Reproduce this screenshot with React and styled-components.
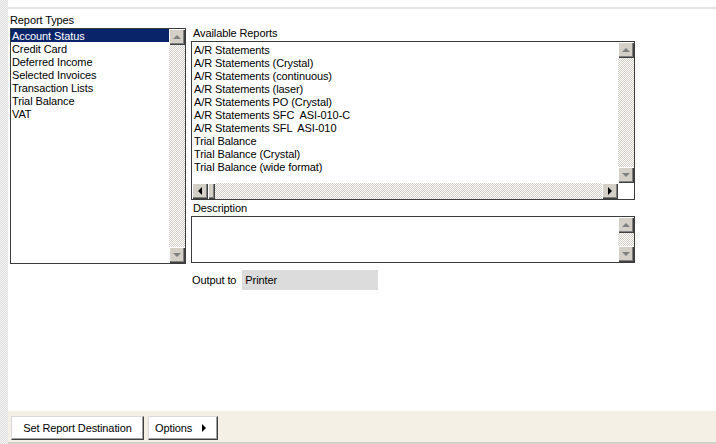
import React from 'react';
import styled, { createGlobalStyle } from 'styled-components';

const GlobalStyle = createGlobalStyle`
  html, body {
    margin: 0;
    padding: 0;
    height: 100%;
    background: #fff;
  }
  #root {
    height: 100%;
  }
  * {
    box-sizing: border-box;
  }
`;

const checker = (a, b) =>
  `repeating-conic-gradient(${a} 0 25%, ${b} 0 50%) 0 0 / 2px 2px`;

const Page = styled.div`
  display: flex;
  height: 100vh;
  font-family: "Liberation Sans", Arial, sans-serif;
  font-size: 11px;
  letter-spacing: -0.1px;
  color: #000;
`;

const SideStrip = styled.div`
  width: 8px;
  flex-shrink: 0;
  background: ${checker('#e0e0e0', '#f2f2f2')};
`;

const Main = styled.div`
  flex: 1;
  display: flex;
  flex-direction: column;
  min-width: 0;
`;

const TopBand = styled.div`
  height: 9px;
  border-bottom: 2px solid #e6e6e6;
`;

const Content = styled.div`
  flex: 1;
  display: flex;
  gap: 5px;
  padding: 4px 0 0 2px;
`;

const LeftColumn = styled.div`
  width: 176px;
  display: flex;
  flex-direction: column;
`;

const RightColumn = styled.div`
  width: 444px;
  display: flex;
  flex-direction: column;
  padding-top: 13px;
`;

const Label = styled.div`
  height: 14px;
  line-height: 13px;
  padding-top: 1px;
  padding-left: ${p => p.$indent || 0}px;
  margin-bottom: 1px;
  white-space: nowrap;
`;

const ListBox = styled.div`
  height: ${p => p.$height}px;
  border: 1px solid #3c3c3c;
  display: flex;
  background: #fff;
`;

const BoxWithHScroll = styled.div`
  height: ${p => p.$height}px;
  border: 1px solid #3c3c3c;
  display: grid;
  grid-template-columns: 1fr 16px;
  grid-template-rows: 1fr 16px;
  background: #fff;
`;

const Rows = styled.div`
  flex: 1;
  min-width: 0;
  overflow: hidden;
  padding-top: ${p => p.$padTop || 0}px;
`;

const Row = styled.div`
  height: 13px;
  line-height: 13px;
  padding-top: 1px;
  padding-left: ${p => p.$indent || 1}px;
  white-space: pre;
  background: ${p => (p.$selected ? '#0a246a' : 'transparent')};
  color: ${p => (p.$selected ? '#fff' : '#000')};
`;

const VScroll = styled.div`
  width: 16px;
  display: flex;
  flex-direction: column;
  flex-shrink: 0;
`;

const HScroll = styled.div`
  height: 16px;
  display: flex;
`;

const Track = styled.div`
  flex: 1;
  background: ${checker('#d4d0c8', '#ffffff')};
`;

const ArrowButton = styled.div`
  width: 16px;
  height: 16px;
  flex-shrink: 0;
  background: #d4d0c8;
  box-shadow: inset 1px 1px #ffffff, inset -1px -1px #404040, inset -2px -2px #808080;
  display: flex;
  align-items: center;
  justify-content: center;
  padding: 0 1px 1px 0;
`;

const Thumb = styled.div`
  width: 7px;
  height: 16px;
  flex-shrink: 0;
  background: #d4d0c8;
  box-shadow: inset 1px 1px #ffffff, inset -1px -1px #404040, inset -2px -2px #808080;
`;

const Corner = styled.div`
  background: #fff;
`;

const Triangle = styled.span`
  width: 0;
  height: 0;
  ${p => {
    const c = p.$color || '#808080';
    switch (p.$dir) {
      case 'up':
        return `border-left: 4px solid transparent; border-right: 4px solid transparent; border-bottom: 4px solid ${c};`;
      case 'down':
        return `border-left: 4px solid transparent; border-right: 4px solid transparent; border-top: 4px solid ${c};`;
      case 'left':
        return `border-top: 4px solid transparent; border-bottom: 4px solid transparent; border-right: 4px solid ${c};`;
      default:
        return `border-top: 4px solid transparent; border-bottom: 4px solid transparent; border-left: 4px solid ${c};`;
    }
  }}
`;

const Spacer = styled.div`
  height: ${p => p.$h}px;
`;

const OutputRow = styled.div`
  display: flex;
  align-items: center;
  margin-top: 7px;
  padding-left: 1px;
  gap: 6px;
`;

const OutputField = styled.div`
  width: 136px;
  height: 20px;
  line-height: 21px;
  background: #dcdcdc;
  padding-left: 3px;
`;

const BottomBar = styled.div`
  height: 33px;
  background: #f4f0e6;
  border-bottom: 2px solid #d2d0cc;
  display: flex;
  align-items: flex-start;
  gap: 4px;
  padding: 5px 0 0 3px;
`;

const ToolButton = styled.button`
  height: 24px;
  width: ${p => p.$width}px;
  background: #fff;
  border: 1px solid;
  border-color: #d8d8d8 #404040 #404040 #d8d8d8;
  box-shadow: inset -1px -1px #a0a0a0;
  font-family: inherit;
  font-size: 11px;
  letter-spacing: -0.1px;
  color: #000;
  display: flex;
  align-items: center;
  justify-content: ${p => (p.$spread ? 'space-between' : 'center')};
  padding: ${p => (p.$spread ? '0 11px 0 6px' : '0')};
  cursor: pointer;
`;

const VerticalBar = () => (
  <VScroll>
    <ArrowButton><Triangle $dir="up" /></ArrowButton>
    <Track />
    <ArrowButton><Triangle $dir="down" /></ArrowButton>
  </VScroll>
);

const reportTypes = [
  'Account Status',
  'Credit Card',
  'Deferred Income',
  'Selected Invoices',
  'Transaction Lists',
  'Trial Balance',
  'VAT',
];

const availableReports = [
  'A/R Statements',
  'A/R Statements (Crystal)',
  'A/R Statements (continuous)',
  'A/R Statements (laser)',
  'A/R Statements PO (Crystal)',
  'A/R Statements SFC  ASI-010-C',
  'A/R Statements SFL  ASI-010',
  'Trial Balance',
  'Trial Balance (Crystal)',
  'Trial Balance (wide format)',
];

const App = () => {
  return (
    <Page>
      <GlobalStyle />
      <SideStrip />
      <Main>
        <TopBand />
        <Content>
          <LeftColumn>
            <Label>Report Types</Label>
            <ListBox $height={236}>
              <Rows>
                {reportTypes.map((t, i) => (
                  <Row key={t} $selected={i === 0}>{t}</Row>
                ))}
              </Rows>
              <VerticalBar />
            </ListBox>
          </LeftColumn>

          <RightColumn>
            <Label $indent={2}>Available Reports</Label>
            <BoxWithHScroll $height={159}>
              <Rows $padTop={1}>
                {availableReports.map(r => (
                  <Row key={r} $indent={2}>{r}</Row>
                ))}
              </Rows>
              <VerticalBar />
              <HScroll>
                <ArrowButton><Triangle $dir="left" $color="#000" /></ArrowButton>
                <Thumb />
                <Track />
                <ArrowButton><Triangle $dir="right" $color="#000" /></ArrowButton>
              </HScroll>
              <Corner />
            </BoxWithHScroll>

            <Spacer $h={1} />
            <Label $indent={2}>Description</Label>
            <ListBox $height={47}>
              <Rows />
              <VerticalBar />
            </ListBox>

            <OutputRow>
              <span>Output to</span>
              <OutputField>Printer</OutputField>
            </OutputRow>
          </RightColumn>
        </Content>

        <BottomBar>
          <ToolButton $width={133}>Set Report Destination</ToolButton>
          <ToolButton $width={70} $spread>
            <span>Options</span>
            <Triangle $dir="right" $color="#000" />
          </ToolButton>
        </BottomBar>
      </Main>
    </Page>
  );
};

export default App;
